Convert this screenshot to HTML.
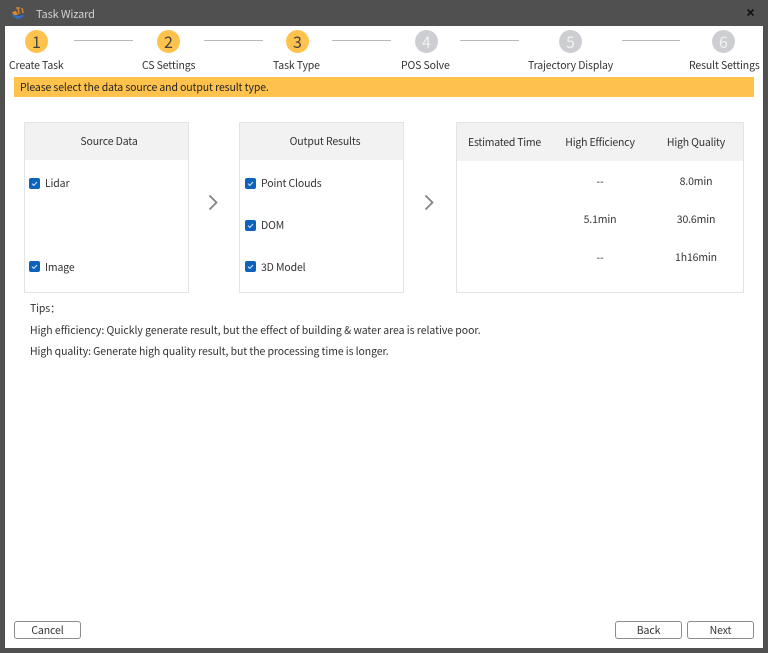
<!DOCTYPE html>
<html>
<head>
<meta charset="utf-8">
<style>
html,body{margin:0;padding:0;width:768px;height:653px;overflow:hidden;background:#505050}
body{position:relative;font-family:"Noto Sans CJK SC","Liberation Sans",sans-serif;font-size:10.5px;color:#333;filter:blur(.25px)}
.a{position:absolute}
.t{position:absolute;white-space:nowrap;line-height:14px;letter-spacing:-.14px}
.c{transform:translateX(-50%)}
.n{position:absolute;top:30px;width:23px;height:23px;border-radius:50%;background:#ffc34d;color:#444;font-size:16px;line-height:23px;text-align:center}
.n.g{background:#cdced2;color:#f2f2f2}
.l{position:absolute;top:40px;height:1px;background:#b9b9b9}
.box{position:absolute;top:122px;height:169px;border:1px solid #e4e4e4;box-sizing:content-box;background:#fff}
.hd{position:absolute;left:0;top:0;right:0;background:#f2f2f2}
.ck{position:absolute;width:11px;height:11px;border-radius:2px;background:#0d62bb}
.ck svg{position:absolute;left:0;top:0}
.b{position:absolute;top:621px;height:16px;border:1px solid #8c8c8c;border-radius:3px;background:#fff;text-align:center;line-height:18px;font-size:10.5px;letter-spacing:-.1px;color:#333}
</style>
</head>
<body>
<div class="a" style="left:5px;top:26px;width:758px;height:622px;background:#fff"></div>

<svg class="a" style="left:10px;top:5px" width="16" height="15" viewBox="0 0 16 15">
<path d="M9 9L8 3M6 3h4M13 8l-1-5" stroke="#c98436" stroke-width="1.6" fill="none"/>
<path d="M1 9l4 1 3 1 5-1 1 1-3 2-3 1-4-2z" fill="#2f6fc9"/>
<path d="M2 7l4-1 2 4-4 0z" fill="#e08a2e"/>
</svg>
<div class="t" style="left:36px;top:7px;color:#d2d2d2;font-size:11px">Task Wizard</div>
<svg class="a" style="left:746px;top:8px" width="9" height="9" viewBox="0 0 9 9"><path d="M1.5 1.5l6 6M7.5 1.5l-6 6" stroke="#111" stroke-width="1.6"/></svg>

<div class="n" style="left:25px">1</div>
<div class="n" style="left:157px">2</div>
<div class="n" style="left:286px">3</div>
<div class="n g" style="left:415px">4</div>
<div class="n g" style="left:559px">5</div>
<div class="n g" style="left:712px">6</div>

<div class="l" style="left:74px;width:59px"></div>
<div class="l" style="left:204px;width:59px"></div>
<div class="l" style="left:332px;width:59px"></div>
<div class="l" style="left:460px;width:59px"></div>
<div class="l" style="left:622px;width:58px"></div>

<div class="t" style="left:9px;top:59px">Create Task</div>
<div class="t" style="left:142px;top:59px">CS Settings</div>
<div class="t" style="left:273px;top:59px">Task Type</div>
<div class="t" style="left:401px;top:59px">POS Solve</div>
<div class="t" style="left:528px;top:59px">Trajectory Display</div>
<div class="t" style="left:689px;top:59px">Result Settings</div>

<div class="a" style="left:14px;top:77px;width:740px;height:20px;background:#ffc34d"></div>
<div class="t" style="left:20px;top:81px;color:#222;letter-spacing:-.12px">Please select the data source and output result type.</div>

<div class="box" style="left:24px;width:163px"><div class="hd" style="height:37px"></div></div>
<div class="box" style="left:239px;width:163px"><div class="hd" style="height:37px"></div></div>
<div class="box" style="left:456px;width:286px"><div class="hd" style="height:38px"></div></div>

<div class="t c" style="left:109px;top:135px">Source Data</div>
<div class="t c" style="left:325px;top:135px">Output Results</div>
<div class="t c" style="left:504.5px;top:136px;letter-spacing:-.25px">Estimated Time</div>
<div class="t c" style="left:600px;top:136px;letter-spacing:-.2px">High Efficiency</div>
<div class="t c" style="left:696px;top:136px;letter-spacing:-.2px">High Quality</div>

<div class="ck" style="left:29px;top:178px"><svg width="11" height="11" viewBox="0 0 11 11"><path d="M3 5.6l1.8 1.8L8 4" stroke="#cfe0f4" stroke-width="1.1" fill="none"/></svg></div>
<div class="t" style="left:45px;top:177px">Lidar</div>
<div class="ck" style="left:29px;top:261px"><svg width="11" height="11" viewBox="0 0 11 11"><path d="M3 5.6l1.8 1.8L8 4" stroke="#cfe0f4" stroke-width="1.1" fill="none"/></svg></div>
<div class="t" style="left:45px;top:261px">Image</div>

<div class="ck" style="left:245px;top:178px"><svg width="11" height="11" viewBox="0 0 11 11"><path d="M3 5.6l1.8 1.8L8 4" stroke="#cfe0f4" stroke-width="1.1" fill="none"/></svg></div>
<div class="t" style="left:261px;top:177px">Point Clouds</div>
<div class="ck" style="left:245px;top:220px"><svg width="11" height="11" viewBox="0 0 11 11"><path d="M3 5.6l1.8 1.8L8 4" stroke="#cfe0f4" stroke-width="1.1" fill="none"/></svg></div>
<div class="t" style="left:261px;top:219px">DOM</div>
<div class="ck" style="left:245px;top:261px"><svg width="11" height="11" viewBox="0 0 11 11"><path d="M3 5.6l1.8 1.8L8 4" stroke="#cfe0f4" stroke-width="1.1" fill="none"/></svg></div>
<div class="t" style="left:261px;top:261px">3D Model</div>

<svg class="a" style="left:208px;top:194px" width="11" height="17" viewBox="0 0 11 17"><path d="M1.5 1.5l7 7-7 7" stroke="#808080" stroke-width="1.7" fill="none"/></svg>
<svg class="a" style="left:424px;top:194px" width="11" height="17" viewBox="0 0 11 17"><path d="M1.5 1.5l7 7-7 7" stroke="#808080" stroke-width="1.7" fill="none"/></svg>

<div class="t c" style="left:600px;top:175px">--</div>
<div class="t c" style="left:696px;top:175px">8.0min</div>
<div class="t c" style="left:600px;top:213px">5.1min</div>
<div class="t c" style="left:696px;top:213px">30.6min</div>
<div class="t c" style="left:600px;top:251px">--</div>
<div class="t c" style="left:696px;top:251px">1h16min</div>

<div class="t" style="left:30px;top:302px">Tips：</div>
<div class="t" style="left:30px;top:324px;letter-spacing:-.05px">High efficiency: Quickly generate result, but the effect of building &amp; water area is relative poor.</div>
<div class="t" style="left:30px;top:345px;letter-spacing:-.1px">High quality: Generate high quality result, but the processing time is longer.</div>

<div class="b" style="left:14px;width:65px">Cancel</div>
<div class="b" style="left:615px;width:65px">Back</div>
<div class="b" style="left:687px;width:65px">Next</div>
</body>
</html>
